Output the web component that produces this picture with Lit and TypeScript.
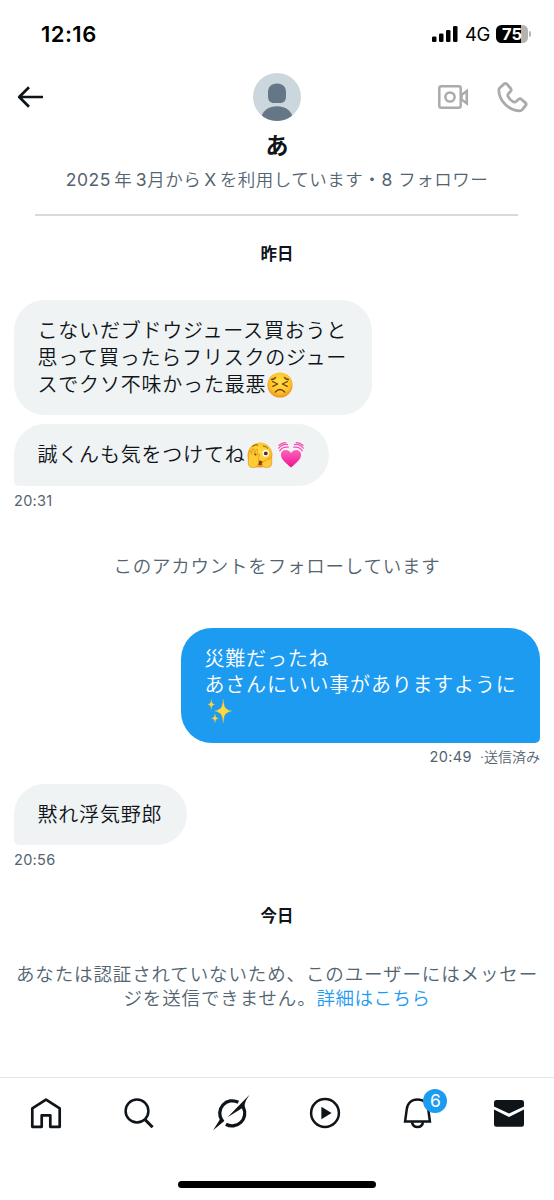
import { LitElement, html, css, svg, nothing } from "lit";
import { customElement, property } from "lit/decorators.js";

const weary = html`<svg class="emoji" viewBox="0 0 26 26">
  <defs><radialGradient id="g" cx=".5" cy=".4" r=".6"><stop offset="0" stop-color="#ffe04a"/><stop offset=".65" stop-color="#fdc52d"/><stop offset="1" stop-color="#f0921c"/></radialGradient></defs>
  <circle cx="13" cy="13" r="12.6" fill="url(#g)"/>
  <g fill="none" stroke="#70400f" stroke-width="1.3" stroke-linecap="round" stroke-linejoin="round">
  <path d="M5.500 9.500l5.200 2.500-5 2.300M20.500 9.500l-5.200 2.500 5 2.300M4.500 7.500q2.500 0 4-2M21.500 7.500q-2.500 0-4-2M8.300 20q4.700-5 9.400 0"/></g></svg>`;

const peeking = html`<svg class="emoji" viewBox="0 0 26 26">
  <defs><radialGradient id="p" cx=".5" cy=".4" r=".6"><stop offset="0" stop-color="#ffe04a"/><stop offset=".65" stop-color="#fdc52d"/><stop offset="1" stop-color="#f0921c"/></radialGradient></defs>
  <circle cx="13" cy="13" r="12.400" fill="url(#p)"/>
  <path d="M5 4.500q3-2.500 6-1.500M16 4q3 0 5 2.500" fill="none" stroke="#8b5615" stroke-width="1"/>
  <ellipse cx="18.800" cy="11.200" rx="3.200" ry="3.500" fill="#fff"/><circle cx="18.800" cy="11.400" r="1.900" fill="#5a2f12"/>
  <path d="M10.300 20q2.700-3 5.400 0v3h-5.400z" fill="#804211"/>
  <path d="M4 25.300Q1.200 24.500 1.300 21V12.500l1.500-4 1.200.5.500 3.500L5.500 6.800l1.400.2.500 5.500L9.300 7l1.400.5-.6 6 1.800-2 1 .8-1.400 4.700.3 4Q10.500 25.500 8 25.500zM22 25.300Q24.800 24.500 24.700 21l.1-4.500-1.300-1.200-1.200 2.500-2-1-1.300 2-2 .2-2.200 2.500Q15 25.300 18 25.400z" fill="#ffcc36" stroke="#dd8a18" stroke-width=".6" stroke-linejoin="round"/>
  <circle cx="8.400" cy="12.600" r="1" fill="#7b4a17"/></svg>`;

const heart = html`<svg class="emoji" viewBox="0 0 26 26">
  <defs><linearGradient id="h" x1="0" y1="0" x2="0" y2="1"><stop offset="0" stop-color="#ff62be"/><stop offset="1" stop-color="#ee128f"/></linearGradient></defs>
  <path d="M13 25.500C8 21 3 17.500 3 12.700 3 7.500 10 6.300 13 11c3-4.700 10-3.500 10 1.700C23 17.500 18 21 13 25.500z" fill="url(#h)"/>
  <path d="M1.700 8.800Q4.500 4.500 10.300 5.200M.7 6.200Q4.500 1.700 9.500 2.600M1 3.300Q4 .5 7.800.6M24.300 8.800Q21.500 4.500 15.700 5.200M25.300 6.200Q21.500 1.700 16.500 2.600M25 3.300Q22 .5 18.200.6" fill="none" stroke="#fa4fb2" stroke-width="1.200" stroke-linecap="round"/></svg>`;

const sparkles = html`<svg class="emoji flush" viewBox="0 0 26 26">
  <g fill="#ffd83d" stroke="#f6bd35" stroke-width=".3"><path d="M16.200 1c.8 8 1.500 10.500 8.500 12-7 1.500-7.700 4-8.500 12-.8-8-1.500-10.500-8.500-12 7-1.500 7.700-4 8.500-12z"/>
  <path d="M4.300 1.500c.4 3.200.8 4.300 3.500 4.900-2.700.6-3.100 1.700-3.500 4.900C3.900 8.100 3.500 7 .8 6.400 3.500 5.800 3.900 4.700 4.300 1.500zM8 15.700c.4 2.900.8 4 3.500 4.600-2.700.6-3.100 1.700-3.500 4.600-.4-2.900-.8-4-3.500-4.600 2.700-.6 3.100-1.700 3.500-4.600z"/></g></svg>`;

const icons: Record<string, unknown> = {
  home: svg`<path d="M2.300 11.300L16 2.600l13.700 8.700v18.500h-9.400V18.300h-8.600v11.500H2.300z" fill="none" stroke="currentColor" stroke-width="2.700" stroke-linejoin="round"/>`,
  search: svg`<path d="M21.800 22.400l7.800 7.800" stroke="currentColor" stroke-width="3"/><circle cx="14" cy="14" r="11.400" fill="none" stroke="currentColor" stroke-width="2.500"/>`,
  grok: svg`<path d="M23.300 5.300A12.600 12.600 0 0 0 7 23.600M28.400 10.600A12.600 12.600 0 0 1 10.900 27.200" fill="none" stroke="currentColor" stroke-width="3.300"/><path d="M-1.900 33.300L5 22.300l3.800.1.500 1.500zM34.500-2.300L12.500 20.300 26.600 11.600l3.200-.5q-.6-4.600 1.400-8z" fill="currentColor"/>`,
  play: svg`<circle cx="17" cy="16" r="13.900" fill="none" stroke="currentColor" stroke-width="2.500"/><path d="M13.400 9.700l10.200 6.300-10.200 6.300z" fill="currentColor"/>`,
  bell: svg`<path d="M5.100 24.400L6.700 12.600C7.400 6.200 11.500 2.400 17.500 2.400s10.100 3.800 10.800 10.200l1.600 11.800z" fill="none" stroke="currentColor" stroke-width="2.500"/><path d="M12 25.200c.5 3.200 2.600 4.700 5.500 4.700s5-1.500 5.500-4.700" fill="none" stroke="currentColor" stroke-width="2.500"/>`,
  mail: svg`<path d="M1 9.400V5.500q0-2.500 2.500-2.500h25Q31 3 31 5.500v3.900l-15 7.200z" fill="currentColor"/><path d="M1 12.600l15 7.300 15-7.300v14.700q0 2.500-2.500 2.500h-25Q1 29.800 1 27.300z" fill="currentColor"/>`,
};

@customElement("chat-bubble")
class ChatBubble extends LitElement {
  @property() kind = "in";
  @property({ type: Boolean }) tail = false;
  static styles = css`
    :host { display: flex; }
    .bubble { box-sizing: border-box; padding: 18.200px 24.500px 16.700px 23.500px; border-radius: 31px; background: #eff3f4; color: #0f1419;
      font-size: 20px; font-weight: 350; letter-spacing: .8px; line-height: 26.700px; white-space: nowrap; }
    .in.tail { border-bottom-left-radius: 5px; }
    .out { margin-left: auto; padding-right: 23.500px; background: #1d9bf0; color: #fff; }
    .out.tail { border-bottom-right-radius: 5px; }
  `;
  render() {
    return html`<div class="bubble ${this.kind} ${this.tail ? "tail" : ""}"><slot></slot></div>`;
  }
}

@customElement("tab-icon")
class TabIcon extends LitElement {
  @property() name = "home";
  @property() badge = "";
  static styles = css`
    :host { display: block; position: relative; width: 32px; height: 32px; color: #0f1419; }
    svg { display: block; width: 32px; height: 32px; overflow: visible; }
    .badge { position: absolute; left: 23px; top: -8px; width: 24px; height: 24px; border-radius: 50%; background: #1d9bf0;
      color: #fff; font: 400 17.500px/24px Inter, sans-serif; text-align: center; }
  `;
  render() {
    return html`<svg viewBox="0 0 32 32">${icons[this.name]}</svg>${this.badge ? html`<span class="badge">${this.badge}</span>` : nothing}`;
  }
}

@customElement("app-root")
class AppRoot extends LitElement {
  static styles = css`
    :host { display: flex; flex-direction: column; width: 554px; height: 1200px; overflow: hidden; background: #fff; color: #0f1419;
      font-family: Inter, "Noto Sans CJK JP", sans-serif; }
    svg { display: block; overflow: visible; }
    .status { display: flex; align-items: center; height: 68px; padding: 0 23px 0 41px; box-sizing: border-box; color: #000; }
    .clock { flex: 1; font-size: 22px; font-weight: 600; letter-spacing: .45px; }
    .net { font-size: 18.500px; margin: 0 6px 0 7px; letter-spacing: -.4px; }
    .battery { width: 32px; height: 18px; border-radius: 5.500px; background: linear-gradient(90deg, #000 78%, #b3b3b3 78%);
      color: #fff; font-size: 16.500px; font-weight: 700; line-height: 18px; text-align: center; }
    .cap { width: 2px; height: 6px; margin-left: 1px; border-radius: 0 2px 2px 0; background: #b3b3b3; }
    .bar { display: grid; grid-template-columns: 1fr 48px 1fr; align-items: center; height: 58px; padding: 0 27px 0 17px; box-sizing: border-box; }
    .bar > :nth-child(2) { margin-left: 5px; }
    .calls { display: flex; justify-content: flex-end; align-items: center; gap: 29px; color: #a9abad; }
    .name { height: 40px; font-size: 23px; font-weight: 700; line-height: 40px; text-align: center; }
    .joined { height: 28px; line-height: 28px; font-size: 17.500px; font-weight: 350; letter-spacing: .52px; color: #536471; text-align: center; white-space: nowrap; }
    .num { font-weight: 400; }
    .l { margin-left: 3.500px; }
    .x { margin: 0 3px; }
    .rule { height: 1.500px; margin: 20px 36px 0 35px; background: #d5dadc; }
    .day { height: 24px; line-height: 24px; font-size: 16.500px; font-weight: 700; text-align: center; }
    .first { margin: 26px 0 34.500px; }
    .today { margin-top: 31px; }
    .thread { display: flex; flex-direction: column; padding: 0 14px; }
    .gap { margin-top: 9px; }
    .last { margin-top: 13px; }
    .emoji { display: inline-block; width: 26px; height: 26px; margin: -6px 0 -6px 1px; vertical-align: 0; }
    .pulse { margin-left: 4.500px; }
    .flush { margin-left: 2px; vertical-align: 1px; }
    .time { height: 28px; line-height: 29px; font-size: 14.500px; letter-spacing: .3px; color: #536471; }
    .sent { text-align: right; letter-spacing: 0; line-height: 28px; }
    .clocked { letter-spacing: .4px; margin-right: 4px; }
    .state { font-size: 14px; font-weight: 350; }
    .following { height: 28px; margin: 38px 0 48px; font-size: 18.500px; font-weight: 350; line-height: 28px; letter-spacing: .77px; color: #536471; text-align: center; }
    .locked { margin-top: 33.500px; font-size: 18.500px; font-weight: 350; line-height: 24.500px; letter-spacing: .87px; color: #536471; text-align: center; white-space: nowrap; }
    .link { color: #1d9bf0; letter-spacing: .5px; }
    .foot { margin-top: auto; height: 123px; box-sizing: border-box; border-top: 1px solid #dfe6e9; display: flex; flex-direction: column; justify-content: space-between; align-items: center; padding: 19px 0 12px; }
    .tabs { display: flex; justify-content: space-between; align-self: stretch; padding: 0 29px 0 30px; }
    .grip { width: 198px; height: 7px; border-radius: 4px; background: #000; }
  `;
  render() {
    return html`
      <div class="status">
        <span class="clock">12:16</span>
        <svg width="26" height="16" viewBox="0 0 26 16"><rect y="10.500" width="4.500" height="5.500" rx="1.300"/><rect x="7" y="7.500" width="4.500" height="8.500" rx="1.300"/><rect x="14" y="4" width="4.500" height="12" rx="1.300"/><rect x="21" width="4.500" height="16" rx="1.300"/></svg>
        <span class="net">4G</span><span class="battery">75</span><span class="cap"></span>
      </div>
      <div class="bar">
        <svg width="27" height="22" viewBox="0 0 27 22" fill="none" stroke="#0f1419" stroke-width="2.700" stroke-linejoin="round"><path d="M26 11H2.500M12 1.200L2.200 11 12 20.800"/></svg>
        <svg width="48" height="48" viewBox="0 0 48 48"><defs><clipPath id="c"><circle cx="24" cy="24" r="24"/></clipPath></defs>
          <g clip-path="url(#c)"><path fill="#ccd6dd" d="M0 0h48v48H0z"/><path d="M24 10.500c6 0 9 3.600 9 9v3.500c0 5-2.300 7-6 7h-6c-3.700 0-6-2-6-7v-3.500c0-5.400 3-9 9-9z" fill="#657786"/><path d="M8 48c0-10 7-14.800 16-14.800S40 38 40 48z" fill="#657786"/></g></svg>
        <div class="calls">
          <svg width="30" height="24" viewBox="0 0 30 24" fill="none" stroke="currentColor" stroke-width="2.500"><rect x="1.300" y="1.300" width="21.400" height="21.400" rx="2"/><circle cx="12" cy="12" r="4.600"/><path d="M23.500 10l5.300-4v12.500l-5.300-4z"/></svg>
          <svg width="30" height="31" viewBox="0 0 30 31" fill="none" stroke="currentColor" stroke-width="2.800" stroke-linejoin="round"><path d="M7.200 1.900Q8.500.8 9.900 2l3.800 4.500q1.100 1.400 0 2.700l-2.300 2.600q-1 1.200-.4 2.500 1.900 3.700 5.600 5.600 1.400.6 2.500-.4l2.500-2.300q1.300-1.100 2.700 0l4.200 3.700q1.300 1.200.1 2.600l-3.300 4.100q-1 1.300-2.600 1.300C11.500 28.600 2 18.600 1.800 8.300q0-1.500 1.100-2.500z"/></svg>
        </div>
      </div>
      <div class="name">あ</div>
      <div class="joined"><span class="num">2025</span><span class="l">年</span><span class="num l">3</span>月から<span class="num x">X</span>を利用しています・<span class="num">8</span> フォロワー</div>
      <div class="rule"></div>
      <div class="day first">昨日</div>
      <div class="thread">
        <chat-bubble>こないだブドウジュース買おうと<br>思って買ったらフリスクのジュー<br>スでクソ不味かった最悪${weary}</chat-bubble>
        <chat-bubble class="gap" tail>誠くんも気をつけてね${peeking}<span class="pulse">${heart}</span></chat-bubble>
        <div class="time">20:31</div>
        <div class="following">このアカウントをフォローしています</div>
        <chat-bubble kind="out" tail>災難だったね<br>あさんにいい事がありますように<br>${sparkles}</chat-bubble>
        <div class="time sent"><span class="clocked">20:49</span> <span class="state">·送信済み</span></div>
        <chat-bubble class="last" tail>黙れ浮気野郎</chat-bubble>
        <div class="time">20:56</div>
      </div>
      <div class="day today">今日</div>
      <div class="locked">あなたは認証されていないため、このユーザーにはメッセー<br>ジを送信できません。<span class="link">詳細はこちら</span></div>
      <div class="foot">
        <div class="tabs">
          <tab-icon name="home"></tab-icon><tab-icon name="search"></tab-icon><tab-icon name="grok"></tab-icon>
          <tab-icon name="play"></tab-icon><tab-icon name="bell" badge="6"></tab-icon><tab-icon name="mail"></tab-icon>
        </div>
        <div class="grip"></div>
      </div>`;
  }
}
